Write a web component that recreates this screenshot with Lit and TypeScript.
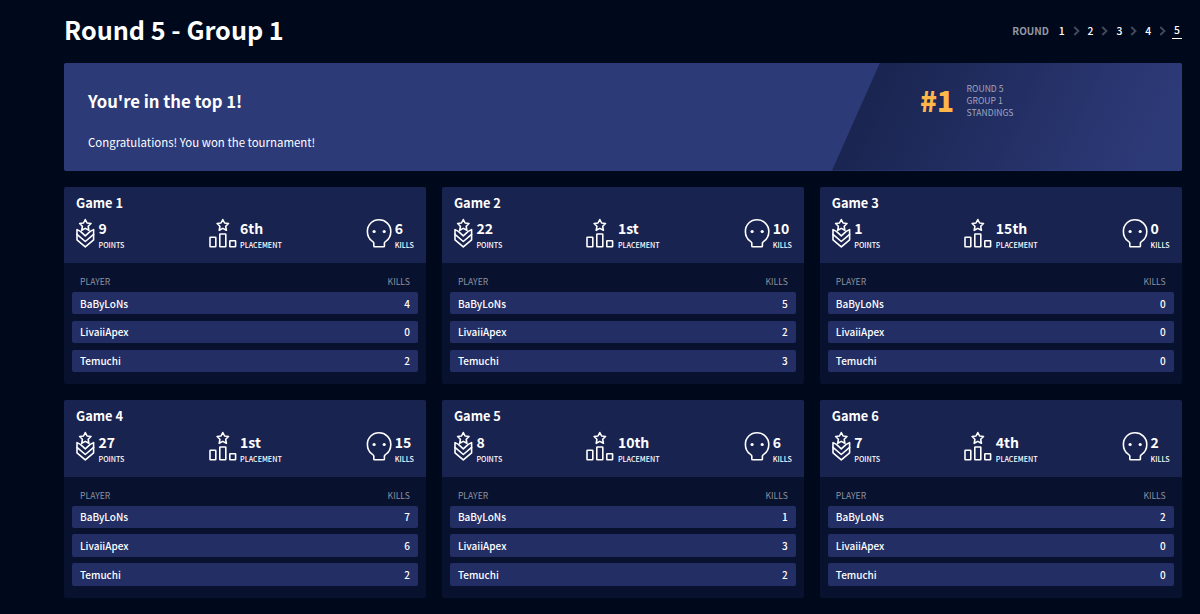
import { LitElement, html, css, svg } from "lit";
import { customElement, property } from "lit/decorators.js";

interface Game {
  points: string;
  place: string;
  kills: string;
  players: number[];
}

const PLAYERS = ["BaByLoNs", "LivaiiApex", "Temuchi"];

const GAMES: Game[] = [
  { points: "9", place: "6th", kills: "6", players: [4, 0, 2] },
  { points: "22", place: "1st", kills: "10", players: [5, 2, 3] },
  { points: "1", place: "15th", kills: "0", players: [0, 0, 0] },
  { points: "27", place: "1st", kills: "15", players: [7, 6, 2] },
  { points: "8", place: "10th", kills: "6", players: [1, 3, 2] },
  { points: "7", place: "4th", kills: "2", players: [2, 0, 0] },
];

const star = svg`<path d="M0 -5.7L1.8 -2.2L5.7 -1.7L2.9 1.1L3.6 5.1L0 3.2L-3.6 5.1L-2.9 1.1L-5.7 -1.7L-1.8 -2.2Z"/>`;

const pointsIcon = html`<svg width="19" height="30" viewBox="0 0 19 30">
  <g transform="translate(9.3 7.2)">${star}</g>
  <path d="M4.4 13.4L1 11.6V21.8L9.3 28.9L17.6 21.8V11.6L14.2 13.4L9.3 17.8Z"/>
  <path d="M1 16.4L9.3 23.5L17.6 16.4"/>
</svg>`;

const placeIcon = html`<svg width="28" height="30" viewBox="0 0 28 30">
  <g transform="translate(13.8 7.2)">${star}</g>
  <rect x="1" y="19.2" width="5.8" height="9.6" rx="0.5"/>
  <rect x="10.8" y="16" width="6" height="12.8" rx="0.5"/>
  <rect x="20.8" y="22.8" width="5.8" height="6" rx="0.5"/>
</svg>`;

const skullIcon = html`<svg width="26" height="30" viewBox="0 0 26 30">
  <path d="M8.6 28.8Q7.8 28.8 7.8 28V25Q7.6 24.2 6.2 23.2C3 20.8 1.4 17.4 1.4 13.4C1.4 6.6 6.6 1.8 13 1.8S24.8 6.6 24.8 13.4C24.8 17.4 23.2 20.8 20 23.2Q18.6 24.2 18.4 25V28Q18.4 28.8 17.6 28.8Z"/>
  <circle class="solid" cx="8.1" cy="13.5" r="1.6"/>
  <circle class="solid" cx="18.2" cy="13.5" r="1.6"/>
</svg>`;

@customElement("game-card")
class GameCard extends LitElement {
  @property({ attribute: false }) game!: Game;
  @property({ type: Number }) number = 1;

  static styles = css`
    :host { display: block; height: 197.5px; border-radius: 2px; overflow: hidden; background: #08112d; }
    .head { box-sizing: border-box; height: 76.8px; padding: 5px 12px 0; background: #192350; }
    .name { font-size: 12.8px; font-weight: 700; line-height: 21.4px; height: 22px; }
    .stats { display: flex; justify-content: space-between; padding-top: 4px; }
    .stat { display: flex; gap: 3.5px; }
    .stat:nth-child(3) { gap: 2.9px; }
    svg { display: block; fill: none; stroke: #fff; stroke-width: 1.6; stroke-linejoin: round; stroke-linecap: round; }
    .solid { fill: #fff; stroke: none; }
    .value { font-size: 14px; font-weight: 700; line-height: 18px; padding-top: 1.9px; }
    .label { font-size: 7.15px; font-weight: 500; line-height: 10px; padding-top: 2.5px; }
    .body { padding: 8px 8px 0; }
    .cols, .row { display: flex; justify-content: space-between; align-items: center; padding: 0 8px; }
    .cols { height: 19px; padding-bottom: 1.6px; font-size: 8.6px; color: #8d92a2; }
    .row { height: 22.4px; margin-bottom: 6.4px; border-radius: 2px; background: #232e64; font-size: 10px; font-weight: 500; }
  `;

  stat(icon: unknown, value: string, label: string) {
    return html`<div class="stat">${icon}
      <div><div class="value">${value}</div><div class="label">${label}</div></div>
    </div>`;
  }

  render() {
    const g = this.game;
    return html`
      <div class="head">
        <div class="name">Game ${this.number}</div>
        <div class="stats">
          ${this.stat(pointsIcon, g.points, "POINTS")}
          ${this.stat(placeIcon, g.place, "PLACEMENT")}
          ${this.stat(skullIcon, g.kills, "KILLS")}
        </div>
      </div>
      <div class="body">
        <div class="cols"><span>PLAYER</span><span>KILLS</span></div>
        ${PLAYERS.map((p, i) => html`<div class="row"><span>${p}</span><span>${g.players[i]}</span></div>`)}
      </div>`;
  }
}

@customElement("app-root")
class AppRoot extends LitElement {
  static styles = css`
    :host { display: block; box-sizing: border-box; height: 614px; padding: 0 18.3px 0 64px; overflow: hidden; background: #00081b; color: #fff; font-family: "Noto Sans CJK JP", "Noto Sans", sans-serif; }
    header { display: flex; justify-content: space-between; align-items: center; height: 62.6px; }
    h1 { margin: 0 0 5px; font-size: 25.2px; font-weight: 700; line-height: 36px; }
    .rounds { display: flex; align-items: center; font-size: 10.4px; font-weight: 500; line-height: 14px; margin-bottom: 1px; }
    .rounds .word { color: #9498a5; font-weight: 700; font-size: 10px; margin-right: 8px; }
    .rounds .n { width: 9.6px; text-align: center; }
    .rounds .on { box-sizing: border-box; height: 16px; border-bottom: 1.5px solid #fff; }
    .rounds svg { width: 19.2px; height: 10px; fill: none; stroke: #454b5c; stroke-width: 1.8; }
    .banner { display: flex; height: 108px; border-radius: 2px; overflow: hidden; background: #2d3a78; margin-bottom: 16px; }
    .msg { width: 768px; box-sizing: border-box; padding: 26.4px 24px 0; }
    .msg h2 { margin: 0; font-size: 16.7px; font-weight: 700; line-height: 24px; }
    .msg p { margin: 20.4px 0 0; font-size: 11.45px; line-height: 18px; }
    .rank { flex: 1; box-sizing: border-box; display: flex; align-items: flex-start; padding: 19px 0 0 88px; background: linear-gradient(115deg, #19244f 10%, #2d3a78 90%); clip-path: polygon(48px 0, 100% 0, 100% 100%, 0 100%); }
    .hash { font-size: 28px; font-weight: 900; line-height: 37px; color: #ffb74a; margin-right: 12.5px; }
    .where { font-size: 8.6px; line-height: 12.4px; color: #a0a6bf; }
    .grid { display: grid; grid-template-columns: repeat(3, 1fr); gap: 16.2px 16px; }
  `;

  render() {
    const chev = html`<svg viewBox="0 0 19.2 10"><path d="M7.3 1L11.5 5L7.3 9"/></svg>`;
    return html`
      <header>
        <h1>Round 5 - Group 1</h1>
        <div class="rounds">
          <span class="word">ROUND</span>
          ${[1, 2, 3, 4, 5].map((n) => html`${n > 1 ? chev : ""}<span class="n ${n === 5 ? "on" : ""}">${n}</span>`)}
        </div>
      </header>
      <section class="banner">
        <div class="msg">
          <h2>You're in the top 1!</h2>
          <p>Congratulations! You won the tournament!</p>
        </div>
        <div class="rank">
          <div class="hash">#1</div>
          <div class="where">ROUND 5<br />GROUP 1<br />STANDINGS</div>
        </div>
      </section>
      <main class="grid">
        ${GAMES.map((g, i) => html`<game-card .game=${g} .number=${i + 1}></game-card>`)}
      </main>`;
  }
}
